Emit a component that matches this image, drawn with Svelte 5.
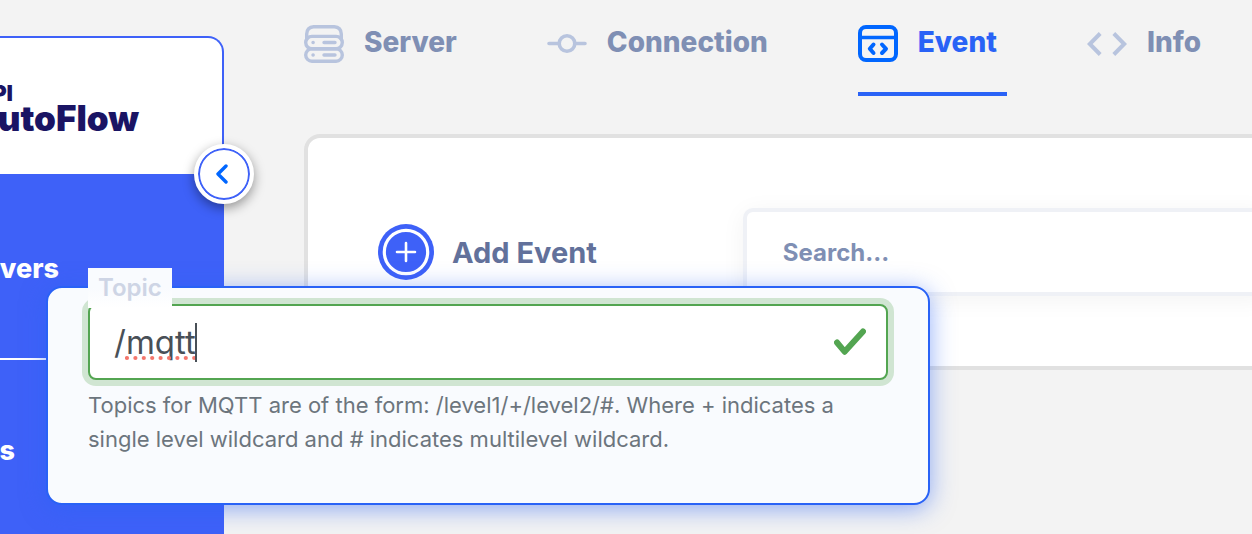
<script>
  let topic = $state('/mqtt');
  let search = $state('');
  let active = $state('Event');
  const tabs = ['Server', 'Connection', 'Event', 'Info'];
</script>

<div class="page">
  <aside class="sidebar">
    <header class="brand">
      <span class="brand-top">API</span>
      <span class="brand-name">AutoFlow</span>
      <button class="collapse" type="button" aria-label="Collapse sidebar">
        <svg width="12" height="20" viewBox="0 0 12 20" fill="none" stroke="#0066ff" stroke-width="3.4" stroke-linecap="round" stroke-linejoin="round"><path d="M10 2 2 10l8 8" /></svg>
      </button>
    </header>
    <nav class="menu">
      <a class="entry first" href="#servers">Servers</a>
      <a class="entry second" href="#s">s</a>
    </nav>
  </aside>

  <main class="main">
    <nav class="tabs">
      {#each tabs as tab}
        <button type="button" class="tab" class:active={tab === active} onclick={() => (active = tab)}>
          <svg class="tab-icon" viewBox="0 0 40 40" fill="none" stroke="currentColor" stroke-linecap="round" stroke-linejoin="round">
            {#if tab === 'Server'}
              <g stroke-width="3.4">
                <path d="M2.700 14V9q.3-7 7-7.300h20.600q6.700.3 7 7.300v5" />
                <rect x="1.700" y="11.400" width="36.600" height="12.400" rx="6.200" />
                <rect x="1.700" y="23.800" width="36.600" height="12.400" rx="6.200" />
                <path d="M9 17.500h.2M9 30h.2M20 17.500h11M20 30h11" />
              </g>
            {:else if tab === 'Connection'}
              <g stroke-width="3.600"><circle cx="20" cy="18.500" r="7.800" /><path d="M2 18.500h10M28 18.500h10" /></g>
            {:else if tab === 'Event'}
              <g stroke-width="4"><rect x="2" y="2" width="36" height="33" rx="6" /><path stroke-width="3.400" d="M2 12.500h36" /><path d="m15.500 19.500-3.700 4.300 3.700 4.200M24 19.500l4 4.300-4 4.200" /></g>
            {:else}
              <path stroke-width="4" stroke-linecap="butt" stroke-linejoin="miter" d="M13.200 8.500 2.800 19l10.400 10.500M26.800 8.500 37.200 19 26.800 29.500" />
            {/if}
          </svg>
          <span>{tab}</span>
        </button>
      {/each}
    </nav>

    <section class="card">
      <button class="add" type="button">
        <svg width="56" height="56" viewBox="0 0 56 56" fill="none"><circle cx="28" cy="28" r="28" fill="#3e61f8" /><circle cx="28" cy="28" r="21.700" stroke="#fff" stroke-width="3.200" /><path d="M28 19v18M19 28h18" stroke="#fff" stroke-width="2.600" stroke-linecap="round" /></svg>
        <span>Add Event</span>
      </button>
      <input class="search" type="text" aria-label="Search" placeholder="Search..." bind:value={search} />
    </section>
  </main>

  <section class="popover">
    <div class="field">
      <label for="topic">Topic</label>
      <input id="topic" type="text" spellcheck="false" bind:value={topic} aria-describedby="topic-help" />
      <svg class="squiggle" width="72" height="6" viewBox="0 0 72 6" fill="#f4766c">
        {#each [2, 10.4, 18.800, 27.200, 35.600, 44, 52.400, 60.800, 69.200] as cx}
          <circle {cx} cy="3" r="2.100" />
        {/each}
      </svg>
      <span class="caret"></span>
      <svg class="check" width="32" height="28" viewBox="0 0 32 28" fill="none" stroke="#53a551" stroke-width="6" stroke-linecap="round" stroke-linejoin="round"><path d="M3 14.500 10.600 23.700 29 3.500" /></svg>
    </div>
    <p id="topic-help">Topics for MQTT are of the form: /level1/+/level2/#. Where + indicates a single level wildcard and # indicates multilevel wildcard.</p>
  </section>
</div>

<style>
  :global(body) { margin: 0; }
  * { box-sizing: border-box; }
  .page {
    position: relative;
    display: flex;
    height: 100vh;
    overflow: hidden;
    background: #f3f3f3;
    font-family: Inter, sans-serif;
  }
  button { border: 0; padding: 0; background: none; font-family: inherit; cursor: pointer; }
  svg { flex: none; display: block; }

  .sidebar { flex: none; display: flex; flex-direction: column; width: 224px; padding-top: 36px; }
  .brand {
    position: relative;
    z-index: 1;
    flex: none;
    display: flex;
    flex-direction: column;
    align-items: flex-end;
    height: 138px;
    padding: 46px 83px 0 0;
    border: solid #3e61f8;
    border-width: 2px 2px 0 0;
    border-radius: 0 16px 0 0;
    background: #fff;
    color: #1a1464;
    font-weight: 900;
  }
  .brand-top { padding-right: 126px; font-size: 22px; line-height: 18px; }
  .brand-name { font-size: 35px; line-height: 32px; }
  .collapse {
    position: absolute;
    right: -32px;
    bottom: -30px;
    display: grid;
    place-items: center;
    width: 60px;
    height: 60px;
    padding-right: 4px;
    border: 4px solid #fff;
    border-radius: 50%;
    background: #fff;
    box-shadow: inset 0 0 0 2px #3e61f8, 0 4px 12px rgba(0, 0, 0, 0.4);
  }
  .menu { flex: 1; padding-top: 4px; background: #3e61f8; }
  .entry {
    display: flex;
    align-items: center;
    justify-content: flex-end;
    height: 182px;
    border-bottom: 2px solid #fff;
    color: #fff;
    font-size: 27px;
    font-weight: 800;
    text-decoration: none;
  }
  .first { padding-right: 165px; }
  .second { padding-right: 209px; }

  .main { flex: 1; min-width: 0; padding-left: 80px; }
  .tabs { display: flex; gap: 80px; height: 96px; }
  .tab {
    flex: none;
    display: flex;
    align-items: flex-start;
    gap: 20px;
    padding: 25px 10px 0 0;
    border-bottom: 4px solid transparent;
    color: #7f8fb4;
    font-size: 28px;
    font-weight: 800;
    line-height: 34px;
  }
  .tab-icon { width: 40px; height: 40px; color: #b8c4de; }
  .tab.active { border-color: #2962f6; color: #2962f6; }
  .tab.active .tab-icon { color: #0066ff; }

  .card {
    display: flex;
    align-items: center;
    gap: 146px;
    margin: 38px -20px 0 0;
    padding: 70px 0 70px 70px;
    border: 4px solid #e1e1e1;
    border-radius: 16px;
    background: #fff;
  }
  .add {
    flex: none;
    display: flex;
    align-items: center;
    gap: 18px;
    color: #62719b;
    font-size: 29px;
    font-weight: 700;
  }
  .search {
    flex: 1;
    min-width: 0;
    height: 88px;
    padding: 0 36px;
    border: 4px solid #eff1f6;
    border-radius: 10px;
    background: #fff;
    box-shadow: 0 4px 24px rgba(0, 0, 0, 0.05);
    font: 700 24px Inter, sans-serif;
    color: #7f8fb4;
  }
  .search::placeholder { color: #7f8fb4; opacity: 1; }

  .popover {
    position: absolute;
    top: 286px;
    left: 46px;
    width: 884px;
    max-width: calc(100% - 92px);
    padding: 16px 40px 47px;
    border: 2px solid #2962f6;
    border-radius: 16px;
    background: #f9fbfe;
    box-shadow: 0 4px 24px rgba(41, 98, 246, 0.5);
  }
  .field { position: relative; }
  .field label {
    position: absolute;
    top: -36px;
    left: 0;
    padding: 0 10px;
    background: linear-gradient(#f9fbfe 50%, #fff);
    color: #ced5e5;
    font-size: 24px;
    font-weight: 600;
    line-height: 40px;
  }
  .field input {
    display: block;
    width: 100%;
    height: 76px;
    padding: 0 64px 0 24px;
    border: 2px solid #53a551;
    border-radius: 8px;
    outline: 0;
    background: #fff;
    box-shadow: 0 0 0 6px #d0e5d2;
    color: #495057;
    font: 400 33px Inter, sans-serif;
  }
  .squiggle { position: absolute; top: 51px; left: 37px; }
  .caret { position: absolute; top: 19px; left: 107px; width: 2px; height: 39px; background: #495057; }
  .check { position: absolute; top: 24px; right: 22px; }
  p { margin: 8px 0 0; color: #6c757d; font-size: 22px; line-height: 34px; }
</style>
